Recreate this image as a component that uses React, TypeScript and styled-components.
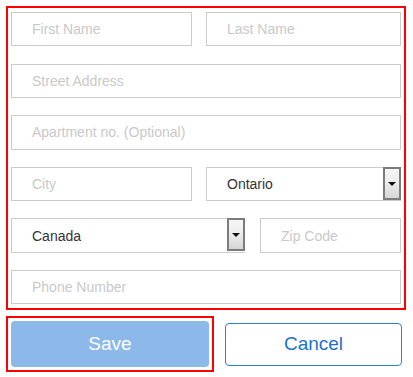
import React from "react";
import styled, { createGlobalStyle } from "styled-components";

const Global = createGlobalStyle`
  html, body { margin: 0; padding: 0; background: #fff; }
  body { font-family: "Liberation Sans", Arial, sans-serif; }
  * { box-sizing: border-box; }
`;

const Page = styled.div`
  padding: 6px;
  width: 413px;
`;

const Form = styled.div`
  width: 400px;
  border: 2px solid #ff0000;
  padding: 4px 3px 4px 3px;
  display: flex;
  flex-direction: column;
  gap: 17.2px;
`;

const Row = styled.div<{ $first: number; $gap: number }>`
  display: grid;
  grid-template-columns: ${(p) => p.$first}px 1fr;
  column-gap: ${(p) => p.$gap}px;
  height: 34.4px;
`;

const Field = styled.input`
  display: block;
  width: 100%;
  height: 34.4px;
  margin: 0;
  border: 1px solid #cccccc;
  border-radius: 0;
  padding: 0 0 0 20px;
  font-family: "Liberation Sans", Arial, sans-serif;
  font-size: 14px;
  color: #333;
  background: #fff;
  outline: none;
  &::placeholder { color: #c9c9c9; opacity: 1; }
`;

const SelectBox = styled.div`
  display: flex;
  align-items: stretch;
  height: 34.4px;
  border: 1px solid #cccccc;
  border-right: none;
  background: #fff;
`;

const SelectValue = styled.div`
  flex: 1;
  display: flex;
  align-items: center;
  padding-left: 20px;
  font-size: 14px;
  color: #333333;
`;

const ArrowButton = styled.div`
  width: 18px;
  margin: -1px 0 0 0;
  height: 33px;
  border: 2px solid #7c7c7c;
  background: linear-gradient(#f6f6f6 0%, #ededed 45%, #d6d6d6 100%);
  display: flex;
  align-items: center;
  justify-content: center;
  padding-top: 1px;
`;

const Tri = styled.div`
  width: 0;
  height: 0;
  border-left: 4px solid transparent;
  border-right: 4px solid transparent;
  border-top: 4px solid #111;
`;

const Select = ({ value }: { value: string }) => (
  <SelectBox>
    <SelectValue>{value}</SelectValue>
    <ArrowButton>
      <Tri />
    </ArrowButton>
  </SelectBox>
);

const Actions = styled.div`
  display: flex;
  align-items: center;
  margin-top: 6px;
  gap: 11px;
`;

const SaveFrame = styled.div`
  width: 208px;
  height: 56px;
  border: 2px solid #ff0000;
  padding: 3px;
  display: flex;
`;

const BaseButton = styled.button`
  font-family: "Liberation Sans", Arial, sans-serif;
  font-size: 19px;
  border-radius: 4px;
  display: flex;
  align-items: center;
  justify-content: center;
  padding: 0;
  cursor: pointer;
`;

const SaveButton = styled(BaseButton)`
  flex: 1;
  height: 46px;
  background: #8cb9e9;
  border: none;
  color: #ffffff;
`;

const CancelButton = styled(BaseButton)`
  width: 177px;
  height: 43px;
  background: #ffffff;
  border: 1px solid #2a7fd9;
  color: #1c6fd1;
`;

export default function App() {
  return (
    <>
      <Global />
      <Page>
        <Form>
          <Row $first={181} $gap={14}>
            <Field placeholder="First Name" />
            <Field placeholder="Last Name" />
          </Row>
          <Field placeholder="Street Address" />
          <Field placeholder="Apartment no. (Optional)" />
          <Row $first={181} $gap={14}>
            <Field placeholder="City" />
            <Select value="Ontario" />
          </Row>
          <Row $first={234} $gap={15}>
            <Select value="Canada" />
            <Field placeholder="Zip Code" />
          </Row>
          <Field placeholder="Phone Number" />
        </Form>
        <Actions>
          <SaveFrame>
            <SaveButton>Save</SaveButton>
          </SaveFrame>
          <CancelButton>Cancel</CancelButton>
        </Actions>
      </Page>
    </>
  );
}
